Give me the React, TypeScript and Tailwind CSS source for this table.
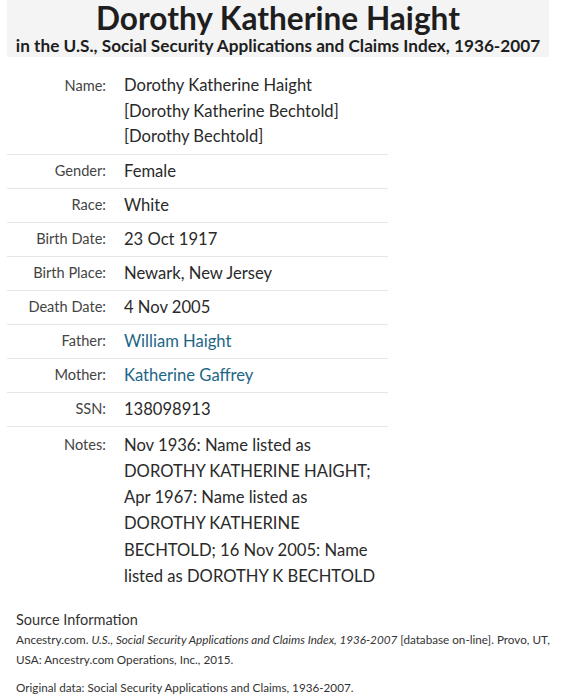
const rows: { label: string; value: string; link?: boolean }[] = [
  { label: "Gender:", value: "Female" },
  { label: "Race:", value: "White" },
  { label: "Birth Date:", value: "23 Oct 1917" },
  { label: "Birth Place:", value: "Newark, New Jersey" },
  { label: "Death Date:", value: "4 Nov 2005" },
  { label: "Father:", value: "William Haight", link: true },
  { label: "Mother:", value: "Katherine Gaffrey", link: true },
  { label: "SSN:", value: "138098913" },
];

const notes = [
  "Nov 1936: Name listed as",
  "DOROTHY KATHERINE HAIGHT;",
  "Apr 1967: Name listed as",
  "DOROTHY KATHERINE",
  "BECHTOLD; 16 Nov 2005: Name",
  "listed as DOROTHY K BECHTOLD",
];

function Label({ children }: { children: React.ReactNode }) {
  return (
    <div className="w-[99px] shrink-0 text-right text-[14.6px] text-[#444]">{children}</div>
  );
}

export default function App() {
  return (
    <div className="w-[562px] h-[700px] bg-white text-[#222] font-['Lato',sans-serif] overflow-hidden">
      <header className="mx-[7px] w-[542px] h-[57px] bg-[#f4f4f4] flex flex-col items-center">
        <h1 className="text-[31.6px] leading-[36px] font-bold text-[#1e1e1e]">Dorothy Katherine Haight</h1>
        <h2 className="text-[17.2px] leading-[19px] font-bold text-[#1e1e1e]">
          in the U.S., Social Security Applications and Claims Index, 1936-2007
        </h2>
      </header>

      <div className="ml-[7px] w-[381px] mt-[16px]">
        <div className="flex items-start gap-[18px] border-b border-[#e6e6e6] pb-[4px]">
          <Label>
            <span className="leading-[25.5px]">Name:</span>
          </Label>
          <div className="text-[16.6px] leading-[25.5px] text-[#2a2a2a]">
            <div>Dorothy Katherine Haight</div>
            <div>[Dorothy Katherine Bechtold]</div>
            <div>[Dorothy Bechtold]</div>
          </div>
        </div>
        {rows.map((r) => (
          <div
            key={r.label}
            className="flex items-center gap-[18px] border-b border-[#e6e6e6] h-[34px]"
          >
            <Label>{r.label}</Label>
            <div className={`text-[16.6px] ${r.link ? "text-[#1c6685]" : "text-[#2a2a2a]"}`}>
              {r.value}
            </div>
          </div>
        ))}
        <div className="flex items-start gap-[18px] pt-[5px]">
          <Label>
            <span className="leading-[26.3px]">Notes:</span>
          </Label>
          <div className="text-[16.6px] leading-[26.3px] text-[#2a2a2a]">
            {notes.map((n) => (
              <div key={n}>{n}</div>
            ))}
          </div>
        </div>
      </div>

      <footer className="pl-[16px] pr-[8px] mt-[22px] text-[#333]">
        <div className="text-[14.5px] leading-[18px]">Source Information</div>
        <p className="text-[11.7px] leading-[20px]">
          Ancestry.com. <i>U.S., Social Security Applications and Claims Index, 1936-2007</i> [database on-line]. Provo, UT, USA: Ancestry.com Operations, Inc., 2015.
        </p>
        <p className="text-[11.7px] leading-[20px] mt-[8px]">
          Original data: Social Security Applications and Claims, 1936-2007.
        </p>
      </footer>
    </div>
  );
}
